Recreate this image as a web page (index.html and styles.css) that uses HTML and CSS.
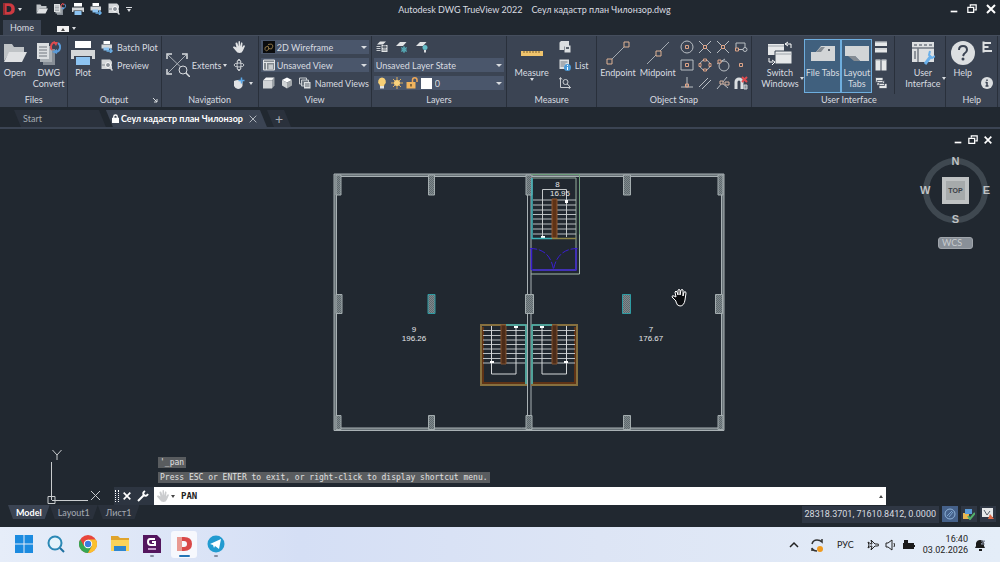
FILE: index.html
```html
<!DOCTYPE html>
<html lang="ru">
<head>
    <meta charset="UTF-8">
    <title>Autodesk DWG TrueView 2022</title>
    <link rel="stylesheet" href="styles.css">
</head>
<body>
    <!-- Shared icons -->
    <svg class="sprite" aria-hidden="true">
        <symbol id="i-open" viewBox="0 0 24 24">
            <path d="M1 3h8l2 3h10v5H7L1 20z" fill="#bfc3c6"/>
            <path d="M6 11h18l-5 10H1z" fill="#dfe1e3"/>
        </symbol>
        <symbol id="i-convert" viewBox="0 0 24 24">
            <path d="M6 8h12v16H6z" fill="#878e96"/>
            <path d="M3 5h12v16H3z" fill="#aab0b5"/>
            <path d="M0 2h12v16H0z" fill="#dcdfe1"/>
            <path d="M2 6h8M2 9h8M2 12h8M2 15h8" stroke="#70777f"/>
            <path d="M15 9a5 5 0 0 1 3-8" fill="none" stroke="#e04b4f" stroke-width="2"/>
            <path d="M16 1l5 0-2 4z" fill="#e04b4f"/>
            <path d="M21 2a5 5 0 0 1-2 9" fill="none" stroke="#5b9bd8" stroke-width="2"/>
            <path d="M20 8v5l-5-2z" fill="#5b9bd8"/>
        </symbol>
        <symbol id="i-print" viewBox="0 0 24 24">
            <path d="M4 0h16v7H4z" fill="#fff"/>
            <path d="M0 9h24v9h-3v-3H3v3H0z" fill="#d4d7d9"/>
            <path d="M5 16h14v8H5z" fill="#8dc4f2"/>
        </symbol>
        <symbol id="i-batch" viewBox="0 0 24 24">
            <path d="M5 0h13v6H5z" fill="#fff"/>
            <path d="M1 7h21v8H1z" fill="#d4d7d9"/>
            <path d="M5 13h11v6H5z" fill="#8dc4f2"/>
            <path d="M11 20h11M18 15l4 5-4 4" fill="none" stroke="#69aee6" stroke-width="3"/>
        </symbol>
        <symbol id="i-preview" viewBox="0 0 24 24">
            <path d="M1 1h17l4 4v15H1z" fill="#d4d7d9"/>
            <path d="M1 12h21" stroke="#80878d" stroke-width="2"/>
            <circle cx="14" cy="12" r="5" fill="#8b9299" stroke="#fff" stroke-width="2"/>
            <path d="M17 16l6 7" stroke="#d4d7d9" stroke-width="3"/>
        </symbol>
        <symbol id="i-extents" viewBox="0 0 24 24">
            <path d="M2 2l19 18M20 2L2 20" stroke="#a9afb6" fill="none"/>
            <path d="M1 6V1h5M16 1h5v5M1 16v5h5" fill="none" stroke="#d9dcdf" stroke-width="1.5"/>
            <circle cx="17" cy="17" r="4" fill="#3b4453" stroke="#d9dcdf"/>
            <path d="M20 20l4 4" stroke="#d9dcdf" stroke-width="1.5"/>
        </symbol>
        <symbol id="i-hand" viewBox="0 0 24 24">
            <path d="M7 13L5 5q0-2 2-2t2 2l2 6V2q0-2 1.500-2T14 2v9l2-7q1-2 2-1t1 2l-1 8 3-4q2-1 3 1l-4 9q-2 5-7 5-5 0-7-4l-6-7q0-3 3-2z" fill="#e1e3e5"/>
        </symbol>
        <symbol id="i-orbit" viewBox="0 0 24 24">
            <ellipse cx="12" cy="12" rx="10" ry="4" fill="none" stroke="#c9cdd1" stroke-width="2"/>
            <ellipse cx="12" cy="12" rx="4" ry="10" fill="none" stroke="#c9cdd1" stroke-width="2"/>
            <path d="M8 5l4-5 4 5M8 19l4 5 4-5" fill="none" stroke="#c9cdd1" stroke-width="2"/>
        </symbol>
        <symbol id="i-viewhand" viewBox="0 0 24 24">
            <path d="M2 8q8-4 17 0v10q-3 6-9 6-6-1-8-6z" fill="#e1e3e5"/>
            <path d="M17 1v12M11 7h12" stroke="#5aa7e8" stroke-width="3"/>
        </symbol>
        <symbol id="i-wire" viewBox="0 0 24 24">
            <path d="M0 0h24v24H0z" fill="#0a0b0d"/>
            <path d="M4 13l6-3 2 6-5 4-3-3zM10 7l7-1 3 4-3 6-6-1" fill="none" stroke="#b49457" stroke-width="1.5"/>
        </symbol>
        <symbol id="i-view" viewBox="0 0 24 24">
            <path d="M1 2h22v20H1z" fill="#82898f" stroke="#e1e3e5" stroke-width="2"/>
            <path d="M1 7h22M7 7v15" stroke="#e1e3e5" stroke-width="2"/>
            <path d="M11 11h9v9h-9z" fill="#c6cacd"/>
        </symbol>
        <symbol id="i-box" viewBox="0 0 24 24">
            <path d="M0 7l6-6h17l-5 6z" fill="#f4f4f4"/>
            <path d="M18 7l5-6v16l-5 6z" fill="#9da3a8"/>
            <path d="M0 7h18v16H0z" fill="#d1d4d6"/>
        </symbol>
        <symbol id="i-cube" viewBox="0 0 24 24">
            <path d="M12 1l10 5-10 5L2 6z" fill="#fff"/>
            <path d="M2 6l10 5v12L2 17z" fill="#d1d4d6"/>
            <path d="M22 6l-10 5v12l10-6z" fill="#a1a6aa"/>
        </symbol>
        <symbol id="i-views" viewBox="0 0 24 24">
            <path d="M1 2h14v12H1z" fill="none" stroke="#c9cdd1" stroke-width="2"/>
            <path d="M5 6h14v12H5z" fill="#6f7780" stroke="#c9cdd1" stroke-width="2"/>
            <path d="M10 10h13v13H10z" fill="#dcdfe1"/>
            <path d="M12 14h9M12 18h9" stroke="#59616b" stroke-width="2"/>
        </symbol>
        <symbol id="i-layers" viewBox="0 0 24 24">
            <path d="M8 1h12l-6 6H2z" fill="#e1e3e5"/>
            <path d="M1 11h8M1 15h8M1 19h8" stroke="#c9cdd1" stroke-width="2"/>
            <path d="M11 8h12v14H11z" fill="#e1e3e5"/>
            <path d="M14 10h6v4h-6zM13 18h8" fill="#6f7780" stroke="#59616b" stroke-width="2"/>
        </symbol>
        <symbol id="i-layfreeze" viewBox="0 0 24 24">
            <path d="M8 2h13l-7 8H0z" fill="#e1e3e5"/>
            <circle cx="16" cy="17" r="5" fill="#4b95a3"/>
            <path d="M16 10v14M10 13l12 8M22 13l-12 8" stroke="#58a9b5" stroke-width="2"/>
        </symbol>
        <symbol id="i-layon" viewBox="0 0 24 24">
            <path d="M8 2h13l-7 8H0z" fill="#e1e3e5"/>
            <circle cx="18" cy="13" r="5" fill="#65bdc8"/>
            <path d="M16 18h4v5h-4z" fill="#d9dcdf"/>
        </symbol>
        <symbol id="i-bulb" viewBox="0 0 24 24">
            <path d="M12 1a8 8 0 0 1 5 14l-1 3H8l-1-3a8 8 0 0 1 5-14z" fill="#f7cf76"/>
            <path d="M8 18h8v5H8z" fill="#e4e5e6"/>
        </symbol>
        <symbol id="i-sun" viewBox="0 0 24 24">
            <path d="M12 0v24M0 12h24M4 4l16 16M20 4L4 20" stroke="#dfae5c" stroke-width="2"/>
            <circle cx="12" cy="12" r="6" fill="#f9d27c"/>
        </symbol>
        <symbol id="i-unlock" viewBox="0 0 24 24">
            <path d="M13 11V6a4 4 0 0 1 9 0v4" fill="none" stroke="#eda758" stroke-width="3"/>
            <path d="M1 10h18v13H1z" fill="#f1b55f"/>
            <path d="M10 14v5" stroke="#66512e" stroke-width="3"/>
        </symbol>
        <symbol id="i-ruler" viewBox="0 0 24 24">
            <path d="M1 10h22v5H1z" fill="#f0c46c"/>
            <path d="M4 10v2M7 10v2M10 10v2M13 10v2M16 10v2M19 10v2" stroke="#806331"/>
        </symbol>
        <symbol id="i-calc" viewBox="0 0 24 24">
            <path d="M1 3l3-3h16v11H10v7H1z" fill="#dcdfe1"/>
            <path d="M11 9h12v14H11z" fill="#dcdfe1"/>
            <path d="M14 12h6v4h-6z" fill="#59616b"/>
        </symbol>
        <symbol id="i-list" viewBox="0 0 24 24">
            <path d="M1 1h19v19H1z" fill="#dcdfe1"/>
            <path d="M3 6h14M3 10h10M3 14h8" stroke="#727a83" stroke-width="2"/>
            <circle cx="17" cy="17" r="7" fill="#4c9bd8"/>
            <path d="M17 12v2M17 16v6" stroke="#fff" stroke-width="2"/>
        </symbol>
        <symbol id="i-locate" viewBox="0 0 24 24">
            <path d="M3 2v19h20M0 5l3-4 3 4M19 17l4 4-4 3" fill="none" stroke="#c9cdd1" stroke-width="2"/>
            <circle cx="13" cy="10" r="5" fill="none" stroke="#c9cdd1" stroke-width="2"/>
            <path d="M16 14l5 4" stroke="#c9cdd1" stroke-width="2"/>
        </symbol>
        <symbol id="i-endpoint" viewBox="0 0 24 24">
            <path d="M4 20L20 4" stroke="#a4abb2"/>
            <path d="M1 18h5v5H1zM18 1h5v5h-5z" fill="#3b4453" stroke="#dfb294"/>
        </symbol>
        <symbol id="i-midpoint" viewBox="0 0 24 24">
            <path d="M1 23L23 1" stroke="#a4abb2"/>
            <path d="M10 10h5v5h-5z" fill="#3b4453" stroke="#dfb294"/>
        </symbol>
        <symbol id="i-center" viewBox="0 0 14 14">
            <circle cx="7" cy="7" r="6" fill="none" stroke="#b9bec3"/>
            <path d="M5.500 5.500h3v3h-3z" fill="none" stroke="#dfa487"/>
        </symbol>
        <symbol id="i-cross" viewBox="0 0 14 14">
            <path d="M1 1l12 12M13 1L1 13" stroke="#b9bec3"/>
            <path d="M5.500 5.500h3v3h-3z" fill="#3b4453" stroke="#dfa487"/>
        </symbol>
        <symbol id="i-insert" viewBox="0 0 14 14">
            <path d="M2 8V3h9v5" fill="none" stroke="#b9bec3"/>
            <circle cx="11" cy="9.500" r="2" fill="none" stroke="#b9bec3"/>
            <path d="M4 9.500h5" stroke="#b9bec3"/>
            <path d="M1.500 8h3v3h-3z" fill="#3b4453" stroke="#dfa487"/>
        </symbol>
        <symbol id="i-geo" viewBox="0 0 14 14">
            <path d="M1 2h12v10H1z" fill="none" stroke="#b9bec3"/>
            <path d="M5.500 5.500h3v3h-3z" fill="none" stroke="#dfa487"/>
        </symbol>
        <symbol id="i-quad" viewBox="0 0 14 14">
            <circle cx="7" cy="7" r="5" fill="none" stroke="#b9bec3"/>
            <path d="M5.500 1h3v2h-3zM5.500 11h3v2h-3zM1 5.500h2v3H1zM11 5.500h2v3h-2z" fill="#3b4453" stroke="#dfa487"/>
        </symbol>
        <symbol id="i-tangent" viewBox="0 0 14 14">
            <circle cx="8" cy="8" r="5" fill="none" stroke="#b9bec3"/>
            <path d="M1 6L9 1" stroke="#b9bec3"/>
            <path d="M2 2h3v3H2z" fill="#3b4453" stroke="#dfa487"/>
        </symbol>
        <symbol id="i-node" viewBox="0 0 14 14">
            <path d="M5.500 5.500h3v3h-3z" fill="none" stroke="#dfa487"/>
        </symbol>
        <symbol id="i-perp" viewBox="0 0 14 14">
            <path d="M7 1v10M1 11h12" stroke="#b9bec3"/>
            <path d="M5.500 8h3v3h-3z" fill="none" stroke="#dfa487"/>
        </symbol>
        <symbol id="i-parallel" viewBox="0 0 14 14">
            <path d="M1 11L10 2M4 13l9-9" stroke="#b9bec3" fill="none"/>
        </symbol>
        <symbol id="i-apparent" viewBox="0 0 14 14">
            <path d="M1 13L11 1M6 7l6 5" stroke="#b9bec3"/>
            <path d="M4 5h3v3H4zM9 6h4v3H9z" fill="#3b4453" stroke="#d8b4a0"/>
        </symbol>
        <symbol id="i-magnet" viewBox="0 0 14 14">
            <path d="M2 13V6a3 3 0 0 1 6 0v7" fill="none" stroke="#dcdfe1" stroke-width="3"/>
            <path d="M8 1l5 5M13 1L8 6" stroke="#e04b4f" stroke-width="2"/>
            <path d="M10 9h3v4h-3z" fill="#8b9299" stroke="#c9cdd1"/>
        </symbol>
        <symbol id="i-switch" viewBox="0 0 24 24">
            <path d="M0 3h16v11H0z" fill="#e6e8e9"/>
            <path d="M7 10h17v13H7z" fill="#e6e8e9" stroke="#3b4453"/>
            <path d="M0 5h16M8 13h16" stroke="#9da4aa"/>
            <path d="M18 3h5v4M20 1l-3 2 3 2M5 21H1v-4M4 19l3 2-3 3" fill="none" stroke="#fff"/>
        </symbol>
        <symbol id="i-filetabs" viewBox="0 0 24 24">
            <path d="M0 11h5l5-6h14v15H0z" fill="#d2d5d7"/>
            <path d="M5 11l5-5h4l-4 5z" fill="#858c93"/>
            <path d="M17 9h2" stroke="#59616b" stroke-width="2"/>
        </symbol>
        <symbol id="i-layouttabs" viewBox="0 0 24 24">
            <path d="M0 5h24v15h-9l-5-5H0z" fill="#d2d5d7"/>
            <path d="M3 15h7l5 5h-6z" fill="#858c93"/>
        </symbol>
        <symbol id="i-tileh" viewBox="0 0 24 24">
            <path d="M0 1h24v9H0zM0 14h24v9H0z" fill="#e6e8e9"/>
            <path d="M0 3h24M0 16h24" stroke="#9da4aa"/>
        </symbol>
        <symbol id="i-tilev" viewBox="0 0 24 24">
            <path d="M1 1h10v22H1zM13 1h10v22H13z" fill="#e6e8e9"/>
            <path d="M1 3h10M13 3h10" stroke="#9da4aa"/>
        </symbol>
        <symbol id="i-cascade" viewBox="0 0 24 24">
            <path d="M1 1h15v10H1zM4 7h15v10H4zM8 13h16v10H8z" fill="#e6e8e9" stroke="#3b4453" stroke-width="1.500"/>
        </symbol>
        <symbol id="i-ui" viewBox="0 0 24 24">
            <path d="M1 1h22v20H1z" fill="#dcdfe1"/>
            <path d="M1 7h22M7 7v14M3 4h3M8 4h3M13 4h3M18 4h3M4 10v8" stroke="#727a83" stroke-width="1.500"/>
            <path d="M14 23l6-8" stroke="#6ab0ea" stroke-width="3"/>
            <path d="M19 10l-1 4 3 3 3-2" fill="none" stroke="#6ab0ea" stroke-width="2"/>
        </symbol>
        <symbol id="i-help" viewBox="0 0 24 24">
            <circle cx="12" cy="12" r="12" fill="#dcdfe1"/>
            <path d="M8 9q0-4 4-4t4 4q0 2-3 4l-1 2" fill="none" stroke="#3b4453" stroke-width="2"/>
            <circle cx="12" cy="18" r="1.500" fill="#3b4453"/>
        </symbol>
        <symbol id="i-app" viewBox="0 0 24 24">
            <path d="M2 2h9q11 0 11 10T11 22H2zm6 5v10h3q5 0 5-5t-5-5z" fill="#cf3a41" fill-rule="evenodd"/>
            <path d="M2 2h3v20H2z" fill="#8f2a30"/>
        </symbol>
        <symbol id="i-info" viewBox="0 0 24 24">
            <circle cx="12" cy="12" r="12" fill="#dcdfe1"/>
            <path d="M12 5v3M12 10v8M9 18h6M9 11h3" stroke="#3b4453" stroke-width="3"/>
        </symbol>
        <symbol id="i-desktop" viewBox="0 0 24 24">
            <path d="M5 1v22M5 4h15M5 12h10M5 20h17" stroke="#dcdfe1" stroke-width="4"/>
        </symbol>
        <symbol id="i-restore" viewBox="0 0 12 12">
            <path d="M4 3V1h7v6H9M1 4h7v6H1z" fill="none" stroke="currentColor" stroke-width="1.500"/>
        </symbol>
        <symbol id="i-close" viewBox="0 0 12 12">
            <path d="M2 2l8 8M10 2l-8 8" stroke="currentColor" stroke-width="2"/>
        </symbol>
        <symbol id="i-min" viewBox="0 0 12 12">
            <path d="M2 9h8" stroke="currentColor" stroke-width="2"/>
        </symbol>
    </svg>

    <header class="titlebar">
        <div class="quick">
            <button class="app-btn" aria-label="Меню"><svg class="i14"><use href="#i-app"/></svg><i class="arrow"></i></button>
            <button aria-label="Open"><svg class="i12"><use href="#i-open"/></svg></button>
            <button aria-label="DWG Convert"><svg class="i12"><use href="#i-convert"/></svg></button>
            <button aria-label="Plot"><svg class="i12"><use href="#i-print"/></svg></button>
            <button aria-label="Batch Plot"><svg class="i12"><use href="#i-batch"/></svg></button>
            <button aria-label="Preview"><svg class="i12"><use href="#i-preview"/></svg></button>
            <button class="barred" aria-label="Customize"><i class="arrow"></i></button>
        </div>
        <div class="title"><span>Autodesk DWG TrueView 2022</span><span>Сеул кадастр план Чилонзор.dwg</span></div>
        <div class="win-controls">
            <button aria-label="Minimize"><svg class="i10"><use href="#i-min"/></svg></button>
            <button aria-label="Restore"><svg class="i10"><use href="#i-restore"/></svg></button>
            <button aria-label="Close"><svg class="i12"><use href="#i-close"/></svg></button>
        </div>
    </header>

    <nav class="ribbon-tabs">
        <button class="ribbon-tab">Home</button>
        <button class="ribbon-toggle" aria-label="Minimize ribbon"><span class="toggle-box"><i class="arrow up dark"></i></span><i class="arrow"></i></button>
    </nav>

    <section class="ribbon">
        <div class="panel p-files">
            <div class="panel-body">
                <button class="big"><svg class="i24"><use href="#i-open"/></svg>Open</button>
                <button class="big"><svg class="i24"><use href="#i-convert"/></svg>DWG<br>Convert</button>
            </div>
            <div class="panel-label">Files</div>
        </div>
        <div class="panel p-output">
            <div class="panel-body">
                <button class="big"><svg class="i24"><use href="#i-print"/></svg>Plot</button>
                <div class="rows">
                    <button class="small"><svg class="i12"><use href="#i-batch"/></svg>Batch Plot</button>
                    <button class="small"><svg class="i12"><use href="#i-preview"/></svg>Preview</button>
                </div>
            </div>
            <div class="panel-label">Output<svg class="launcher" viewBox="0 0 6 6"><path d="M1 1l4 4M5 2v3H2" fill="none" stroke="#d9dce0"/></svg></div>
        </div>
        <div class="panel p-nav">
            <div class="panel-body">
                <button class="extents"><svg class="i24"><use href="#i-extents"/></svg>Extents<i class="arrow"></i></button>
                <div class="rows">
                    <button class="small" aria-label="Pan"><svg class="i12"><use href="#i-hand"/></svg></button>
                    <button class="small" aria-label="Orbit"><svg class="i12"><use href="#i-orbit"/></svg></button>
                    <button class="small" aria-label="ViewCube"><svg class="i12"><use href="#i-viewhand"/></svg><i class="arrow"></i></button>
                </div>
            </div>
            <div class="panel-label">Navigation</div>
        </div>
        <div class="panel p-view">
            <div class="rows stretch">
                <label class="combo"><svg class="i12"><use href="#i-wire"/></svg><select aria-label="Visual style"><option>2D Wireframe</option></select></label>
                <label class="combo"><svg class="i12"><use href="#i-view"/></svg><select aria-label="View"><option>Unsaved View</option></select></label>
                <div class="tools">
                    <button aria-label="Box"><svg class="i12"><use href="#i-box"/></svg></button>
                    <button aria-label="Cube"><svg class="i12"><use href="#i-cube"/></svg></button>
                    <button class="small"><svg class="i12"><use href="#i-views"/></svg>Named Views</button>
                </div>
            </div>
            <div class="panel-label">View</div>
        </div>
        <div class="panel p-layers">
            <div class="rows stretch">
                <div class="tools">
                    <button aria-label="Layer properties"><svg class="i12"><use href="#i-layers"/></svg></button>
                    <button aria-label="Freeze"><svg class="i12"><use href="#i-layfreeze"/></svg></button>
                    <button aria-label="Turn on"><svg class="i12"><use href="#i-layon"/></svg></button>
                </div>
                <label class="combo"><select aria-label="Layer state"><option>Unsaved Layer State</option></select></label>
                <label class="combo layer"><svg class="i12"><use href="#i-bulb"/></svg><svg class="i12"><use href="#i-sun"/></svg><svg class="i12"><use href="#i-unlock"/></svg><i class="swatch"></i><select aria-label="Layer"><option>0</option></select></label>
            </div>
            <div class="panel-label">Layers</div>
        </div>
        <div class="panel p-measure">
            <div class="panel-body">
                <button class="big"><svg class="i24"><use href="#i-ruler"/></svg>Measure<i class="arrow"></i></button>
                <div class="rows">
                    <button class="small" aria-label="Calculator"><svg class="i12"><use href="#i-calc"/></svg></button>
                    <button class="small"><svg class="i12"><use href="#i-list"/></svg>List</button>
                    <button class="small" aria-label="Locate point"><svg class="i12"><use href="#i-locate"/></svg></button>
                </div>
            </div>
            <div class="panel-label">Measure</div>
        </div>
        <div class="panel p-snap">
            <div class="panel-body">
                <button class="big"><svg class="i24"><use href="#i-endpoint"/></svg>Endpoint</button>
                <button class="big"><svg class="i24"><use href="#i-midpoint"/></svg>Midpoint</button>
                <div class="snap-grid">
                    <button aria-label="Center"><svg class="i14"><use href="#i-center"/></svg></button>
                    <button aria-label="Intersection"><svg class="i14"><use href="#i-cross"/></svg></button>
                    <button aria-label="Apparent intersection"><svg class="i14"><use href="#i-cross"/></svg></button>
                    <button aria-label="Insertion"><svg class="i14"><use href="#i-insert"/></svg></button>
                    <button aria-label="Geometric center"><svg class="i14"><use href="#i-geo"/></svg></button>
                    <button aria-label="Quadrant"><svg class="i14"><use href="#i-quad"/></svg></button>
                    <button aria-label="Tangent"><svg class="i14"><use href="#i-tangent"/></svg></button>
                    <button aria-label="Node"><svg class="i14"><use href="#i-node"/></svg></button>
                    <button aria-label="Perpendicular"><svg class="i14"><use href="#i-perp"/></svg></button>
                    <button aria-label="Parallel"><svg class="i14"><use href="#i-parallel"/></svg></button>
                    <button aria-label="Nearest"><svg class="i14"><use href="#i-apparent"/></svg></button>
                    <button aria-label="Snap none"><svg class="i14"><use href="#i-magnet"/></svg></button>
                </div>
            </div>
            <div class="panel-label">Object Snap</div>
        </div>
        <div class="panel p-ui">
            <div class="panel-body">
                <button class="big with-arrow"><svg class="i24"><use href="#i-switch"/></svg>Switch<br>Windows<i class="arrow"></i></button>
                <button class="big on"><svg class="i24"><use href="#i-filetabs"/></svg>File Tabs</button>
                <button class="big on"><svg class="i24"><use href="#i-layouttabs"/></svg>Layout<br>Tabs</button>
                <div class="rows arrange">
                    <button class="small" aria-label="Tile horizontally"><svg class="i12"><use href="#i-tileh"/></svg></button>
                    <button class="small" aria-label="Tile vertically"><svg class="i12"><use href="#i-tilev"/></svg></button>
                    <button class="small" aria-label="Cascade"><svg class="i12"><use href="#i-cascade"/></svg></button>
                </div>
                <button class="big with-arrow"><svg class="i24"><use href="#i-ui"/></svg>User<br>Interface<i class="arrow"></i></button>
            </div>
            <div class="panel-label">User Interface</div>
        </div>
        <div class="panel p-help">
            <div class="panel-body">
                <button class="big"><svg class="i24"><use href="#i-help"/></svg>Help</button>
                <div class="rows apart">
                    <button class="small" aria-label="Desktop analytics"><svg class="i12"><use href="#i-desktop"/></svg></button>
                    <button class="small" aria-label="About"><svg class="i12"><use href="#i-info"/></svg></button>
                </div>
            </div>
            <div class="panel-label">Help</div>
        </div>
    </section>

    <nav class="file-tabs">
        <button class="file-tab">Start</button>
        <div class="file-tab active">
            <svg class="lock" viewBox="0 0 8 10"><path d="M2 5V3a2 2 0 0 1 4 0v2" fill="none" stroke="#fff" stroke-width="1.500"/><path d="M0 4h8v6H0z" fill="#fff"/></svg>
            <span>Сеул кадастр план Чилонзор</span>
            <button aria-label="Close tab"><svg class="i10" viewBox="0 0 12 12"><path d="M2 2l8 8M10 2l-8 8" stroke="currentColor"/></svg></button>
        </div>
        <button class="file-tab add" aria-label="New tab">+</button>
    </nav>

    <main class="canvas">
        <svg class="drawing" viewBox="0 129 1000 376">
            <defs>
                <pattern id="hatch" width="2" height="2" patternUnits="userSpaceOnUse">
                    <path d="M0 0h2v2H0z" fill="#5f696e"/>
                    <path d="M0 2l2-2" stroke="#8d9699" stroke-width="0.700"/>
                </pattern>
                <!-- one lower staircase, the other is its mirror -->
                <g id="stairs">
                    <path d="M481 325h45v60h-45z" fill="none" stroke="#86703f" stroke-width="2"/>
                    <path d="M483 327v56h42" fill="none" stroke="#5f3316" stroke-width="2"/>
                    <path d="M483 330.500h42M483 335.500h42M483 340h42M483 344.500h42M483 349h42M483 353.500h42M483 358.500h42M483 363h42" stroke="#b9bec1"/>
                    <path d="M501 325h5v39h-5z" fill="#4c2c19" stroke="#80512f"/>
                    <path d="M491.500 326v48h24.500v-48" fill="none" stroke="#d4d7d9"/>
                    <path d="M490 361h4v2h-4zM514 326h4v2h-4z" fill="#fff"/>
                    <path d="M506 325h20v59" fill="none" stroke="#3fb3b8" stroke-width="1.500"/>
                </g>
            </defs>
            <!-- outer and middle walls -->
            <path d="M334 174h390v256.500H334zM336.500 176.500v251.500h185v0h200v-251.500z" fill="#687277" stroke="#a9b1b4" fill-rule="evenodd"/>
            <path d="M527.500 176v252M531 176v252" stroke="#a9b1b4"/>
            <!-- columns -->
            <g fill="url(#hatch)" stroke="#a3acae">
                <path d="M336 175h5v20h-5zM428.500 175h6v20h-6zM526 175h6v20h-6zM623.500 175h7v20h-7zM718 175h5v20h-5z"/>
                <path d="M336 294.500h6v19h-6zM525.500 294.500h8v19h-8zM715.500 294.500h7v19h-7z"/>
                <path d="M336 415.500h5v14h-5zM428.500 415.500h6v14h-6zM526 415.500h6v14h-6zM623.500 415.500h7v14h-7zM718 415.500h5v14h-5z"/>
                <path d="M428 294.500h7v19h-7zM622.500 294.500h8v19h-8z" stroke="#2e9ca3"/>
            </g>
            <!-- room 8 -->
            <path d="M531 174.500h48.500v99.500H531" fill="none" stroke="#a4b8a9"/>
            <path d="M531 174.500h48.500v60" fill="none" stroke="#6fa07c"/>
            <path d="M533 178h43v92h-43" fill="none" stroke="#95ac9b"/>
            <path d="M533 200h43M533 205h43M533 210h43M533 214.500h43M533 219h43M533 224h43M533 229h43M533 234h43" stroke="#b9bec1"/>
            <path d="M552 199h5v39h-5z" fill="#5f3316" stroke="#8f5730"/>
            <path d="M542.500 237v-47.500h24v47.500" fill="none" stroke="#c4c8ca"/>
            <path d="M541 236h4v2h-4zM565 200h3v3h-3z" fill="#fff"/>
            <path d="M532 178v60.500h20" fill="none" stroke="#3fb3b8" stroke-width="1.500"/>
            <path d="M552 238.500h24" stroke="#8f8548" stroke-width="1.500"/>
            <g fill="none" stroke="#3a1fd0">
                <path d="M532 270h44v-22M531.500 248v22" stroke-width="1.500"/>
                <path d="M530 248.500q20 0 23.500 21q4-21 24-21" stroke-dasharray="7 2"/>
            </g>
            <use href="#stairs"/>
            <use href="#stairs" transform="matrix(-1 0 0 1 1058 0)"/>
            <g class="room">
                <text x="557.500" y="187">8</text><text x="560" y="196">16.95</text>
                <text x="414" y="332">9</text><text x="414" y="341">196.26</text>
                <text x="651" y="332">7</text><text x="651" y="341">176.67</text>
            </g>
            <!-- pan cursor -->
            <path d="M676 301l-4-4q0-2 2-1l2 1-1-5q1-2 2 0l1 3v-5q1-1 2 0v5l1-5q1-1 2 0v6l1-4q2-1 2 1l-1 7q-1 6-5 6-3 0-4-4z" fill="#0b0d10" stroke="#fff"/>
        </svg>

        <svg class="ucs" viewBox="0 0 56 56">
            <path d="M4.500 13v38M5 51.500h36M1 47.500h7v7H1z" fill="none" stroke="#c9ccce"/>
            <path d="M5.500 1l4.500 5 4.500-5M10 6v5M44 42l9 9M53 42l-9 9" fill="none" stroke="#c9ccce"/>
        </svg>

        <div class="doc-controls">
            <button aria-label="Minimize drawing"><svg class="i10"><use href="#i-min"/></svg></button>
            <button aria-label="Restore drawing"><svg class="i10"><use href="#i-restore"/></svg></button>
            <button aria-label="Close drawing"><svg class="i10"><use href="#i-close"/></svg></button>
        </div>
        <div class="viewcube">
            <span class="north">N</span><span class="west">W</span>
            <button class="cube-top">TOP</button>
            <span class="east">E</span><span class="south">S</span>
        </div>
        <button class="wcs">WCS</button>

        <div class="command">
            <div class="history"><span>'_pan</span></div>
            <div class="history"><span>Press ESC or ENTER to exit, or right-click to display shortcut menu.</span></div>
            <div class="command-line">
                <div class="command-tools">
                    <i class="grip"></i>
                    <button aria-label="Close command line"><svg class="i10"><use href="#i-close"/></svg></button>
                    <button aria-label="Customize"><svg class="i12" viewBox="0 0 12 12"><path d="M1 11l6-6" stroke="#fff" stroke-width="2"/><path d="M8 1q-3 2-1 4t4-1" fill="none" stroke="#fff" stroke-width="2"/></svg></button>
                </div>
                <div class="command-field">
                    <svg class="i12 pale"><use href="#i-hand"/></svg><i class="arrow dark"></i>
                    <input type="text" value="PAN" aria-label="Command">
                    <i class="arrow up dark"></i>
                </div>
            </div>
        </div>
    </main>

    <footer class="statusbar">
        <div class="layout-tabs">
            <button class="layout-tab active">Model</button>
            <button class="layout-tab">Layout1</button>
            <button class="layout-tab">Лист1</button>
        </div>
        <div class="status-tools">
            <span class="coords">28318.3701, 71610.8412, 0.0000</span>
            <button class="on" aria-label="Isolate"><svg class="i12" viewBox="0 0 12 12"><circle cx="6" cy="6" r="5" fill="none" stroke="#8fb3d8"/><path d="M3 8l5-5M5 9l4-5" stroke="#7da5cf"/></svg></button>
            <button aria-label="Hardware"><svg class="i12" viewBox="0 0 12 12"><path d="M0 5h6v6H0z" fill="#e9b64e"/><path d="M2 1h7v5H2z" fill="#5b9bd8"/><path d="M5 8l2 3 5-6" fill="none" stroke="#53b16b" stroke-width="2"/></svg></button>
            <button aria-label="Trusted file"><svg class="i12" viewBox="0 0 12 12"><path d="M0 0h11v9H0z" fill="#e6e8e9"/><path d="M2 2l3 5 3-4" fill="none" stroke="#555d66"/><path d="M6 11l2-5 4 5z" fill="#dd6a48"/></svg></button>
        </div>
    </footer>

    <div class="taskbar">
        <div class="apps">
            <button aria-label="Start"><svg viewBox="0 0 18 18"><path d="M0 0h8.500v8.500H0zM9.500 0H18v8.500H9.500zM0 9.500h8.500V18H0zM9.500 9.500H18V18H9.500z" fill="#1c8be0"/></svg></button>
            <button aria-label="Search"><svg viewBox="0 0 18 18"><circle cx="8" cy="8" r="6.500" fill="#e4f3fb" stroke="#2b88b5" stroke-width="2"/><path d="M13 13l4 4" stroke="#1d6fa0" stroke-width="2"/></svg></button>
            <button aria-label="Chrome"><svg viewBox="0 0 18 18"><circle cx="9" cy="9" r="9" fill="#e8453c"/><path d="M1.200 4.500A9 9 0 0 0 9 18l4-7H5z" fill="#34a853"/><path d="M9 18a9 9 0 0 0 7.800-13.500H9l4 6.500z" fill="#fbc02d"/><circle cx="9" cy="9" r="4.200" fill="#fff"/><circle cx="9" cy="9" r="3.200" fill="#3b7de0"/></svg></button>
            <button aria-label="Explorer"><svg viewBox="0 0 18 18"><path d="M0 1h7l2 2h9v13H0z" fill="#e0a42c"/><path d="M0 5h18v11H0z" fill="#fbd35b"/><path d="M3 11h12v5H3z" fill="#2e86d0"/></svg></button>
            <button class="running" aria-label="Foxit PDF"><svg viewBox="0 0 18 18"><path d="M0 0h14l4 4v14H0z" fill="#54165e"/><path d="M12 4H7Q5 4 5 7t3 3h4V7H9" fill="none" stroke="#fff" stroke-width="2"/><path d="M5 14h8" stroke="#c59acb" stroke-width="2"/></svg></button>
            <button class="running current" aria-label="DWG TrueView"><svg viewBox="0 0 18 18"><path d="M2 2h7q8 0 8 7t-8 7H2zm5 4v6h2q3 0 3-3t-3-3z" fill="#d94848" fill-rule="evenodd"/><path d="M2 2h5v14H2z" fill="#e99a92"/></svg></button>
            <button class="running" aria-label="Telegram"><svg viewBox="0 0 18 18"><circle cx="9" cy="9" r="8.500" fill="#229bd0"/><path d="M3 9l11-5-2 10-4-3-1 2-1-3z" fill="#fff"/></svg></button>
        </div>
        <div class="tray">
            <button aria-label="Hidden icons"><svg class="i12" viewBox="0 0 12 12"><path d="M2 8l4-4 4 4" fill="none" stroke="#222" stroke-width="1.500"/></svg></button>
            <button aria-label="Update"><svg class="i14" viewBox="0 0 14 14"><path d="M2 6q1-4 5-4 3 0 5 2V1M2 13v-3q1 3 5 3" fill="none" stroke="#333" stroke-width="1.500"/><circle cx="10" cy="11" r="3" fill="#f09a1e"/></svg></button>
            <button class="lang">РУС</button>
            <button class="net" aria-label="Quick settings">
                <svg class="i12" viewBox="0 0 12 12"><path d="M1 3l1 3-1 3 3-2h1L4 11l4-4h2q2 0 2-1t-2-1H8L4 1l1 4H4z" fill="none" stroke="#222"/></svg>
                <svg class="i12" viewBox="0 0 12 12"><path d="M1 4h2l4-3v10L3 8H1z" fill="none" stroke="#222"/><path d="M9 4q1 2 0 4" fill="none" stroke="#222"/></svg>
                <svg class="i12" viewBox="0 0 12 12"><path d="M0 4h11v6H0z" fill="#1b1b1b"/><path d="M11 6h1v2h-1zM1 1h4v5H1z" fill="#1b1b1b"/></svg>
            </button>
            <div class="clock"><time>16:40</time><time>03.02.2026</time></div>
            <button aria-label="Notifications"><svg class="i12" viewBox="0 0 12 12"><path d="M1 9l1-2V4q1-3 4-3 4 0 4 3v3l1 2z" fill="#1b1b1b"/><path d="M5 11h3" stroke="#1b1b1b" stroke-width="2"/><path d="M7 2h4l-4 3h4" fill="none" stroke="#8a93a5"/></svg></button>
        </div>
    </div>
</body>
</html>
```

FILE: styles.css
```css
* {
    box-sizing: border-box;
}
body {
    margin: 0;
    height: 100vh;
    display: flex;
    flex-direction: column;
    overflow: hidden;
    background-color: #212830;
    color: #d9dce0;
    font-family: Lato, Roboto, sans-serif;
    font-size: 9px;
    line-height: 11px;
}
button, input, select {
    margin: 0;
    padding: 0;
    border: none;
    background: none;
    color: inherit;
    font: inherit;
}
svg {
    display: block;
    flex: none;
}
.sprite {
    position: absolute;
    width: 0;
    height: 0;
}
.i10 { width: 10px; height: 10px; }
.i12 { width: 12px; height: 12px; }
.i14 { width: 14px; height: 14px; }
.i24 { width: 24px; height: 24px; }
.arrow {
    flex: none;
    width: 0;
    height: 0;
    border: 2px solid transparent;
    border-top: 3px solid #d9dce0;
    border-bottom: none;
}
.arrow.up {
    border-top: none;
    border-bottom: 3px solid #d9dce0;
}
.arrow.dark {
    border-top-color: #444;
    border-bottom-color: #444;
}

/* Title bar */
.titlebar {
    display: flex;
    align-items: center;
    height: 18px;
    padding: 0 3px 0 2px;
}
.quick {
    display: flex;
    align-items: center;
    gap: 6px;
}
.app-btn {
    display: flex;
    align-items: center;
    gap: 2px;
    margin-right: 8px;
}
.barred {
    padding-top: 1px;
    border-top: 1px solid #d9dce0;
}
.barred .arrow {
    display: block;
    margin: 0 1px;
}
.title {
    flex: 1;
    display: flex;
    justify-content: center;
    gap: 9px;
    padding-right: 12px;
}
.win-controls, .doc-controls {
    display: flex;
    align-items: center;
    gap: 8px;
    color: #fff;
}

/* Ribbon */
.ribbon-tabs {
    display: flex;
    align-items: flex-end;
    height: 17px;
    padding-left: 3px;
}
.ribbon-tab {
    height: 15px;
    padding: 0 7px;
    background-color: #3b4453;
}
.ribbon-toggle {
    display: flex;
    align-items: center;
    gap: 3px;
    height: 13px;
    margin-left: 16px;
}
.toggle-box {
    padding: 2px 4px 1px;
    background-color: #f2f2f2;
}
.toggle-box .arrow {
    display: block;
}
.ribbon {
    display: flex;
    height: 72px;
    padding-right: 2px;
    background-color: #3b4453;
    border-top: 1px solid #454e5d;
}
.panel {
    display: flex;
    flex-direction: column;
    border-right: 1px solid #29303b;
    min-width: 0;
}
.p-files { flex: 68 1 0; }
.p-output { flex: 93 1 0; }
.p-nav { flex: 97 1 0; }
.p-view { flex: 113 1 0; }
.p-layers { flex: 136 1 0; }
.p-measure { flex: 89 1 0; }
.p-snap { flex: 156 1 0; }
.p-ui { flex: 195 1 0; }
.p-help { flex: 51 1 0; }
.panel-body {
    flex: 1;
    display: flex;
    justify-content: center;
    gap: 4px;
}
.panel-label {
    display: flex;
    justify-content: center;
    height: 13px;
}
.p-output .panel-label {
    padding-left: 8px;
}
.p-output .panel-label::before {
    content: "";
    margin-left: auto;
}
.launcher {
    width: 6px;
    height: 6px;
    margin: 3px 3px 0 auto;
}
.big {
    display: flex;
    flex-direction: column;
    align-items: center;
    height: 54px;
    margin-top: 3px;
    padding-top: 2px;
    white-space: nowrap;
}
.big svg {
    margin-bottom: 2px;
}
.small {
    display: flex;
    align-items: center;
    gap: 4px;
    height: 14px;
    white-space: nowrap;
}
.rows {
    display: flex;
    flex-direction: column;
    gap: 4px;
    padding-top: 4px;
}
.rows.stretch {
    flex: 1;
    padding: 4px 2px 0;
}
.extents {
    display: flex;
    align-items: center;
    gap: 2px;
}
.p-files .panel-body,
.p-output .panel-body,
.p-nav .panel-body {
    gap: 6px;
}
.combo {
    display: flex;
    align-items: center;
    gap: 2px;
    height: 14px;
    padding: 0 2px;
    background-color: #4a566b;
}
.combo select {
    flex: 1;
    min-width: 0;
    appearance: none;
}
.combo::after {
    content: "";
    border: 3px solid transparent;
    border-top-color: #d9dce0;
    border-bottom: none;
}
.combo.layer {
    gap: 3px;
}
.swatch {
    width: 11px;
    height: 11px;
    background-color: #fff;
}
.tools {
    display: flex;
    align-items: center;
    gap: 6px;
    height: 14px;
    padding-left: 2px;
}
.p-layers .tools {
    gap: 8px;
}
.p-measure .panel-body {
    gap: 10px;
}
.snap-grid {
    display: grid;
    grid-template-columns: repeat(4, 14px);
    grid-auto-rows: 14px;
    gap: 4px;
    padding-top: 4px;
}
.p-ui .panel-body {
    gap: 0;
    padding-left: 4px;
}
.with-arrow {
    position: relative;
    padding-left: 5px;
    padding-right: 5px;
}
.with-arrow .arrow {
    position: absolute;
    right: 0;
    bottom: 13px;
}
.big.on {
    padding: 1px 1px 0;
    background-color: #40607e;
    border: 1px solid #6eaede;
}
.arrange {
    margin-left: 3px;
    margin-right: 5px;
    padding-right: 7px;
    border-right: 1px solid #29303b;
}
.p-help .panel-body {
    gap: 6px;
}
.rows.apart {
    gap: 22px;
}

/* File tabs */
.file-tabs {
    display: flex;
    align-items: flex-end;
    height: 22px;
    padding-left: 14px;
    border-bottom: 2px solid #3b4453;
}
.file-tab {
    height: 17px;
    padding-left: 9px;
    padding-right: 64px;
    background-color: #2a313c;
    color: #a5abb3;
    clip-path: polygon(0 0, calc(100% - 7px) 0, 100% 100%, 7px 100%);
}
.file-tab.active {
    display: flex;
    align-items: center;
    gap: 2px;
    padding: 0 9px 0 6px;
    background-color: #3b4453;
    color: #fff;
    font-weight: bold;
}
.file-tab.active button {
    margin-left: 3px;
    color: #c5cad0;
}
.file-tab.add {
    padding: 0 8px;
    font-size: 14px;
}
.lock {
    width: 7px;
    height: 9px;
}

/* Drawing area */
.canvas {
    position: relative;
    flex: 1;
    min-height: 0;
}
.drawing {
    width: 100%;
    height: 100%;
}
.room {
    font-family: "Liberation Sans", Arial, sans-serif;
    font-size: 8px;
    fill: #e4e6e8;
    text-anchor: middle;
}
.ucs {
    position: absolute;
    left: 47px;
    bottom: 0;
    width: 56px;
    height: 56px;
}
.doc-controls {
    position: absolute;
    top: 6px;
    right: 7px;
    gap: 5px;
}
.viewcube {
    position: absolute;
    top: 29px;
    right: 12px;
    width: 65px;
    height: 65px;
    display: grid;
    place-items: center;
    border: 6px solid #3f4850;
    border-radius: 50%;
    color: #bfc2c4;
    font-family: "Liberation Sans", Arial, sans-serif;
    font-size: 11px;
    font-weight: bold;
}
.viewcube span {
    position: absolute;
}
.north { top: -8px; }
.south { bottom: -8px; }
.west { left: -9px; }
.east { right: -8px; }
.cube-top {
    width: 27px;
    height: 27px;
    background-color: #a6aaab;
    border: 4px solid #bfc2c3;
    color: #3b4148;
    font-size: 7px;
    line-height: 11px;
}
.wcs {
    position: absolute;
    top: 108px;
    right: 27px;
    width: 35px;
    height: 12px;
    padding-left: 3px;
    border: 1px solid #a0a5ab;
    border-radius: 3px;
    background-color: #899098;
    color: #c8cccf;
    text-align: left;
    line-height: 10px;
}
.command {
    position: absolute;
    left: 114px;
    right: 114px;
    bottom: 0;
    font-family: "DejaVu Sans Mono", "Liberation Mono", monospace;
}
.history {
    height: 15px;
    padding-left: 44px;
    font-size: 8px;
}
.history span {
    display: inline-block;
    padding: 0 2px;
    background-color: #595c5f;
    color: #e0e0e0;
}
.command-line {
    display: flex;
    height: 18px;
}
.command-tools {
    display: flex;
    align-items: center;
    gap: 3px;
    width: 40px;
    padding-left: 1px;
    background-color: #2d3541;
    color: #fff;
}
.command-tools button:last-child {
    margin-left: 2px;
}
.grip {
    width: 4px;
    height: 12px;
    border-left: 1px dotted #fff;
    border-right: 1px dotted #fff;
}
.command-field {
    flex: 1;
    display: flex;
    align-items: center;
    gap: 2px;
    padding: 0 3px;
    background-color: #fff;
}
.command-field input {
    flex: 1;
    min-width: 0;
    padding-left: 4px;
    color: #222;
    font-weight: bold;
}
.pale {
    filter: brightness(0.9);
}

/* Layout tabs and status */
.statusbar {
    display: flex;
    justify-content: space-between;
    height: 22px;
    padding: 0 4px 4px 8px;
}
.layout-tabs {
    display: flex;
}
.layout-tab {
    height: 14px;
    padding: 0 8px;
    background-color: #2a313c;
    color: #a5abb3;
    clip-path: polygon(0 0, 100% 0, calc(100% - 5px) 100%, 5px 100%);
}
.layout-tab.active {
    background-color: #3b4453;
    color: #fff;
    font-weight: bold;
}
.status-tools {
    display: flex;
    align-items: center;
    gap: 3px;
}
.coords {
    padding: 3px;
    background-color: #2f3744;
    font-family: Roboto, sans-serif;
}
.status-tools button {
    padding: 2px;
    background-color: #2f3744;
}
.status-tools button.on {
    background-color: #45618a;
}

/* Taskbar */
.taskbar {
    display: flex;
    justify-content: space-between;
    align-items: center;
    height: 35px;
    padding: 0 14px 0 11px;
    background: linear-gradient(to right, #e6edf9, #d5dff5 30%, #dde5f5 60%, #e4edf8);
    color: #222;
}
.apps {
    display: flex;
    gap: 6px;
}
.apps button {
    display: flex;
    flex-direction: column;
    align-items: center;
    width: 26px;
    height: 27px;
    padding-top: 4px;
    border-radius: 3px;
}
.apps svg {
    width: 18px;
    height: 18px;
}
.running::after {
    content: "";
    width: 4px;
    height: 2px;
    margin-top: 2px;
    border-radius: 1px;
    background-color: #868da0;
}
.current {
    background-color: #f6f8fd;
}
.current::after {
    width: 11px;
    background-color: #2474b5;
}
.tray {
    display: flex;
    align-items: center;
    gap: 6px;
}
.tray > button:first-child {
    margin-right: 4px;
}
.lang {
    margin: 0 7px;
}
.net {
    display: flex;
    gap: 6px;
}
.clock {
    display: flex;
    flex-direction: column;
    align-items: flex-end;
    margin-left: 2px;
    font-family: Roboto, sans-serif;
}
```
